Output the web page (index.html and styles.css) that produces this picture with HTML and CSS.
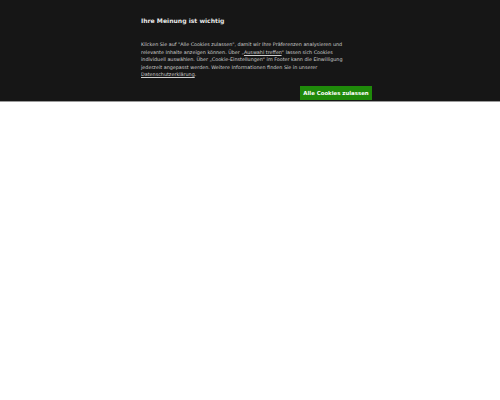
FILE: index.html
```html
<!DOCTYPE html>
<html lang="de">
<head>
<meta charset="utf-8">
<link rel="stylesheet" href="styles.css">
</head>
<body>
<div class="banner">
  <div class="inner">
    <h2 class="title">Ihre Meinung ist wichtig</h2>
    <p class="text">Klicken Sie auf "Alle Cookies zulassen", damit wir Ihre Präferenzen analysieren und relevante Inhalte anzeigen können. Über „<a href="#">Auswahl treffen</a>“ lassen sich Cookies individuell auswählen. Über „Cookie-Einstellungen“ im Footer kann die Einwilligung jederzeit angepasst werden. Weitere Informationen finden Sie in unserer <a href="#">Datenschutzerklärung</a>.</p>
    <div class="actions"><button class="btn">Alle Cookies zulassen</button></div>
  </div>
</div>
</body>
</html>
```
FILE: styles.css
```css
html, body { margin: 0; padding: 0; background: #fff; }
body { font-family: "DejaVu Sans", sans-serif; }
.banner {
  background: #161616;
  border-bottom: 1px solid #9a9a9a;
  height: 102px;
  box-sizing: border-box;
}
.inner {
  width: 232px;
  margin-left: 140px;
  padding-top: 16px;
}
.title {
  margin: 0;
  color: #e8e8e8;
  font-size: 6.1px;
  font-weight: bold;
  line-height: 10px;
  padding-left: 1px;
}
.text {
  margin: 15px 0 0 0;
  width: 210px;
  color: #cfcfcf;
  font-size: 4.85px;
  line-height: 7.5px;
  padding-left: 1px;
}
.text a { color: #cfcfcf; text-decoration: underline; }
.actions { display: flex; justify-content: flex-end; margin-top: 7px; }
.btn {
  background: #1f8a0a;
  color: #fff;
  border: none;
  font-family: "DejaVu Sans", sans-serif;
  font-weight: bold;
  font-size: 5.4px;
  white-space: nowrap;
  padding: 0 2px;
  height: 14px;
  width: 72px;
}
```
